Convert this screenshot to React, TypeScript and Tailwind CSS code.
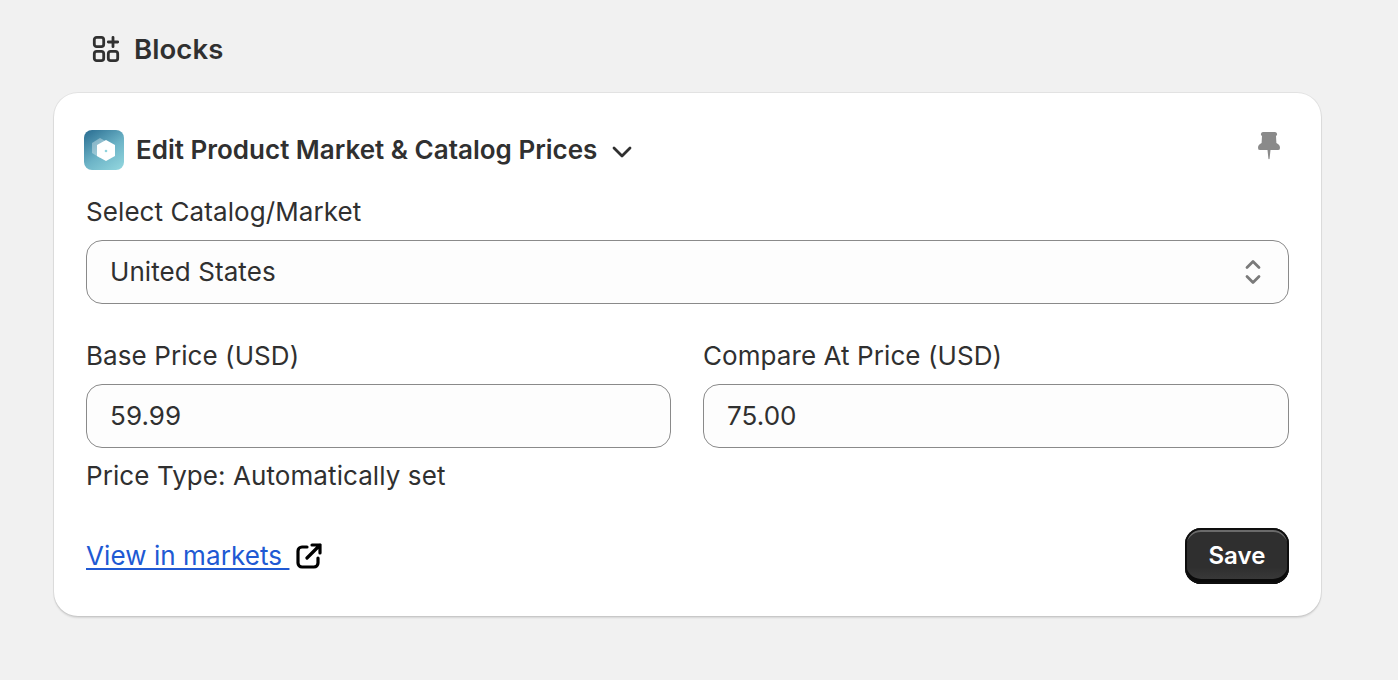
import React from "react";

const BlocksIcon = () => (
  <svg width="28" height="28" viewBox="0 0 28 28" fill="none" stroke="#303030" strokeWidth="2.800" strokeLinecap="round" strokeLinejoin="round">
    <rect x="2.300" y="2.300" width="9.400" height="9.400" rx="2.400" />
    <rect x="2.300" y="16.300" width="9.400" height="9.400" rx="2.400" />
    <rect x="16.300" y="16.300" width="9.400" height="9.400" rx="2.400" />
    <path d="M21 2.300v9.400M16.300 7h9.400" />
  </svg>
);

const AppLogo = () => (
  <svg width="40" height="40" viewBox="0 0 40 40">
    <defs>
      <linearGradient id="logoBg" x1="0.150" y1="0" x2="0.850" y2="1">
        <stop offset="0" stopColor="#2f7396" />
        <stop offset="0.550" stopColor="#6db4c7" />
        <stop offset="1" stopColor="#8fd3dc" />
      </linearGradient>
    </defs>
    <rect width="40" height="40" rx="8" fill="url(#logoBg)" />
    <path d="M16 8l9 5v10l-9 5-8-5V13z" fill="#ffffff" fillOpacity="0.350" />
    <path d="M22 10l9 5v11l-9 5-9-5V15z" fill="#ffffff" />
    <circle cx="22" cy="21" r="1.300" fill="#8fd3dc" />
  </svg>
);

const PinIcon = () => (
  <svg width="24" height="30" viewBox="0 0 24 30" fill="#8a8a8a">
    <path d="M6 1h12a2.200 2.200 0 0 1 1 4.100l.4 6.900c2.400 1.200 3.600 2.700 3.600 4.900a2.200 2.200 0 0 1-2.200 2.200h-7.300l-.9 8.500a.6.600 0 0 1-1.200 0l-.9-8.500H3.200A2.200 2.200 0 0 1 1 16.900c0-2.200 1.200-3.700 3.600-4.900L5 5.100A2.200 2.200 0 0 1 6 1z" />
  </svg>
);

const SelectIcon = () => (
  <svg width="16" height="26" viewBox="0 0 16 26" fill="none" stroke="#7a7a7a" strokeWidth="2.800" strokeLinecap="round" strokeLinejoin="round">
    <path d="M2 8.500l6-6 6 6M2 17.500l6 6 6-6" />
  </svg>
);

const ExternalIcon = () => (
  <svg width="26" height="26" viewBox="0 0 26 26" fill="none" stroke="#000000" strokeWidth="3.200" strokeLinecap="round" strokeLinejoin="round">
    <path d="M11 4H6a4 4 0 0 0-4 4v12a4 4 0 0 0 4 4h12a4 4 0 0 0 4-4v-5" />
    <path d="M11 15L24 2M16 2h8v8" />
  </svg>
);

const App: React.FC = () => {
  return (
    <div className="h-[680px] w-[1398px] overflow-hidden bg-[#f1f1f1] pl-[54px] pr-[77px] text-[#303030] font-['Inter',sans-serif] text-[26px] leading-[40px] tracking-[0.08px]">
      {/* Section title */}
      <div className="flex h-[93px] items-center gap-[14px] pl-[38px] pt-[4px]">
        <BlocksIcon />
        <h2 className="text-[27.500px] font-[580]">Blocks</h2>
      </div>

      {/* Card */}
      <div className="h-[523px] rounded-[24px] bg-white px-[32px] pt-[37px] shadow-[0_0_0_1px_rgba(0,0,0,0.06),0_2px_2px_rgba(0,0,0,0.12)]">
        <div className="flex items-start justify-between">
          <div className="flex items-center -ml-[2px]">
            <AppLogo />
            <span className="ml-[12px] font-[580] tracking-normal">Edit Product Market &amp; Catalog Prices</span>
            <svg className="ml-[14px] mt-[3px]" width="22" height="14" viewBox="0 0 22 14" fill="none" stroke="#303030" strokeWidth="2.800" strokeLinecap="round" strokeLinejoin="round">
              <path d="M3 3l8 8 8-8" />
            </svg>
          </div>
          <div className="mr-[8px] mt-[1px]">
            <PinIcon />
          </div>
        </div>

        <label className="mt-[22px] block h-[40px]">Select Catalog/Market</label>
        <div className="mt-[8px] flex h-[64px] items-center justify-between rounded-[16px] border border-[#8a8a8a] bg-[#fdfdfd] pl-[23px] pr-[27px]">
          <span>United States</span>
          <SelectIcon />
        </div>

        <div className="mt-[32px] grid grid-cols-[585px_1fr] gap-[32px]">
          <div>
            <label className="block h-[40px]">Base Price (USD)</label>
            <div className="mt-[8px] flex h-[64px] items-center rounded-[16px] border border-[#8a8a8a] bg-[#fdfdfd] pl-[23px]">59.99</div>
          </div>
          <div>
            <label className="block h-[40px]">Compare At Price (USD)</label>
            <div className="mt-[8px] flex h-[64px] items-center rounded-[16px] border border-[#8a8a8a] bg-[#fdfdfd] pl-[23px]">75.00</div>
          </div>
        </div>

        <p className="mt-[8px]">Price Type: Automatically set</p>

        <div className="mt-[32px] flex items-center justify-between">
          <div className="flex items-center">
            <a className="whitespace-pre text-[#2059d3] underline decoration-2 underline-offset-[3px]">View in markets </a>
            <span className="ml-[7px]">
              <ExternalIcon />
            </span>
          </div>
          <button className="h-[56px] w-[104px] rounded-[16px] bg-[linear-gradient(#2f2f2f_70%,#3c3c3c)] text-[24px] font-semibold text-white leading-none shadow-[inset_0_0_0_2px_#0e0e0e,inset_0_3px_0_1px_#6a6a6a,inset_0_-4px_0_1px_#0a0a0a]">
            Save
          </button>
        </div>
      </div>
    </div>
  );
};

export default App;
